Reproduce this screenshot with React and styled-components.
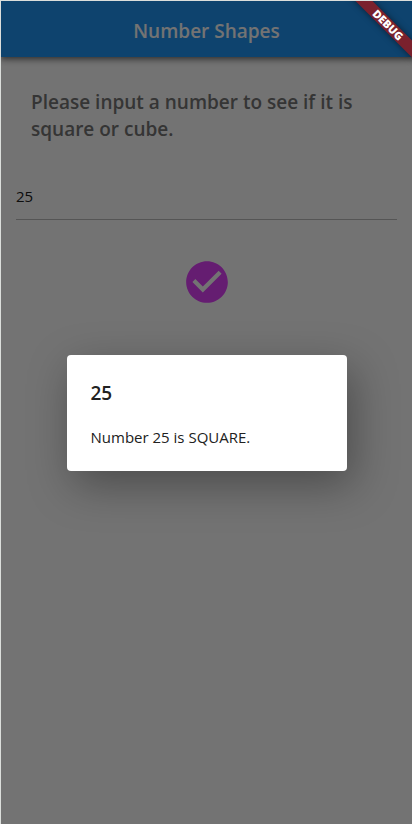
import React, { useState } from "react";
import styled, { createGlobalStyle } from "styled-components";

const GlobalStyle = createGlobalStyle`
  *, *::before, *::after { box-sizing: border-box; }
  body {
    margin: 0;
    font-family: "Segoe UI", "Open Sans", "Noto Sans", sans-serif;
    background: #ffffff;
  }
  h1, h2, p { margin: 0; }
`;

const Screen = styled.div`
  position: relative;
  display: flex;
  flex-direction: column;
  min-height: 100vh;
  border: solid #dbdedb;
  border-width: 1px 0 0 1px;
  overflow: hidden;
`;

const AppBar = styled.header`
  display: flex;
  align-items: center;
  justify-content: center;
  height: 56px;
  background: #2196f3;
  box-shadow: 0 2px 4px -1px rgba(0, 0, 0, 0.3), 0 4px 5px rgba(0, 0, 0, 0.22),
    0 1px 10px rgba(0, 0, 0, 0.18);
`;

const AppTitle = styled.h1`
  padding-top: 4px;
  font-size: 19px;
  line-height: 28px;
  font-weight: 600;
  color: #ffffff;
`;

const Content = styled.main`
  display: flex;
  flex-direction: column;
  flex: 1;
`;

const Prompt = styled.label`
  padding: 32px 30px 0;
  font-size: 19px;
  line-height: 27px;
  font-weight: 600;
  color: #757575;
`;

const NumberInput = styled.input`
  height: 48px;
  margin: 29px 15px 0;
  padding: 0;
  border: 0;
  border-bottom: 1px solid #bcbcbc;
  border-radius: 0;
  outline: none;
  background: transparent;
  font: inherit;
  font-size: 15px;
  color: #212121;
`;

const CheckButton = styled.button`
  align-self: center;
  display: flex;
  margin-top: 37px;
  padding: 0;
  border: 0;
  background: transparent;
  color: #e040fb;
  cursor: pointer;
`;

const Scrim = styled.div`
  position: absolute;
  inset: 0;
  display: flex;
  align-items: center;
  justify-content: center;
  background: rgba(0, 0, 0, 0.55);
`;

const Dialog = styled.section`
  min-width: 280px;
  padding: 24px;
  border-radius: 4px;
  background: #ffffff;
  color: #212121;
  box-shadow: 6px 14px 44px rgba(0, 0, 0, 0.34);
`;

const DialogTitle = styled.h2`
  font-size: 19px;
  line-height: 28px;
  font-weight: 600;
`;

const DialogText = styled.p`
  padding-top: 20px;
  font-size: 15px;
  line-height: 20px;
`;

const BannerCorner = styled.div`
  position: absolute;
  top: 0;
  right: 0;
  width: 80px;
  height: 80px;
  overflow: hidden;
  pointer-events: none;
`;

const BannerStrip = styled.div`
  position: absolute;
  top: 18px;
  right: -26px;
  width: 100px;
  height: 12px;
  transform: rotate(45deg);
  background: #7a212d;
  box-shadow: 0 0 6px rgba(0, 0, 0, 0.5);
  color: #ffffff;
  font-size: 11px;
  line-height: 12px;
  font-weight: 800;
  text-align: center;
`;

function CheckCircle() {
  return (
    <svg width="50" height="50" viewBox="0 0 24 24" fill="currentColor" aria-hidden="true">
      <path d="M12 2C6.48 2 2 6.48 2 12s4.48 10 10 10 10-4.48 10-10S17.52 2 12 2zm-2 15l-5-5 1.41-1.41L10 14.17l7.59-7.59L19 8l-9 9z" />
    </svg>
  );
}

function describe(n) {
  const square = Math.round(Math.sqrt(n)) ** 2 === n;
  const cube = Math.round(Math.cbrt(n)) ** 3 === n;
  if (square && cube) return "both SQUARE and CUBE";
  if (square) return "SQUARE";
  if (cube) return "CUBE";
  return "neither SQUARE nor CUBE";
}

export default function App() {
  const [value, setValue] = useState("25");
  const [open, setOpen] = useState(true);

  return (
    <>
      <GlobalStyle />
      <Screen>
        <AppBar>
          <AppTitle>Number Shapes</AppTitle>
        </AppBar>
        <Content>
          <Prompt htmlFor="number">Please input a number to see if it is square or cube.</Prompt>
          <NumberInput
            id="number"
            inputMode="numeric"
            value={value}
            onChange={(e) => setValue(e.target.value)}
          />
          <CheckButton type="button" aria-label="Check number" onClick={() => setOpen(true)}>
            <CheckCircle />
          </CheckButton>
        </Content>
        {open && (
          <Scrim onClick={() => setOpen(false)}>
            <Dialog
              role="dialog"
              aria-modal="true"
              aria-labelledby="result-title"
              onClick={(e) => e.stopPropagation()}
            >
              <DialogTitle id="result-title">{value}</DialogTitle>
              <DialogText>
                Number {value} is {describe(Number(value))}.
              </DialogText>
            </Dialog>
          </Scrim>
        )}
        <BannerCorner>
          <BannerStrip>DEBUG</BannerStrip>
        </BannerCorner>
      </Screen>
    </>
  );
}
